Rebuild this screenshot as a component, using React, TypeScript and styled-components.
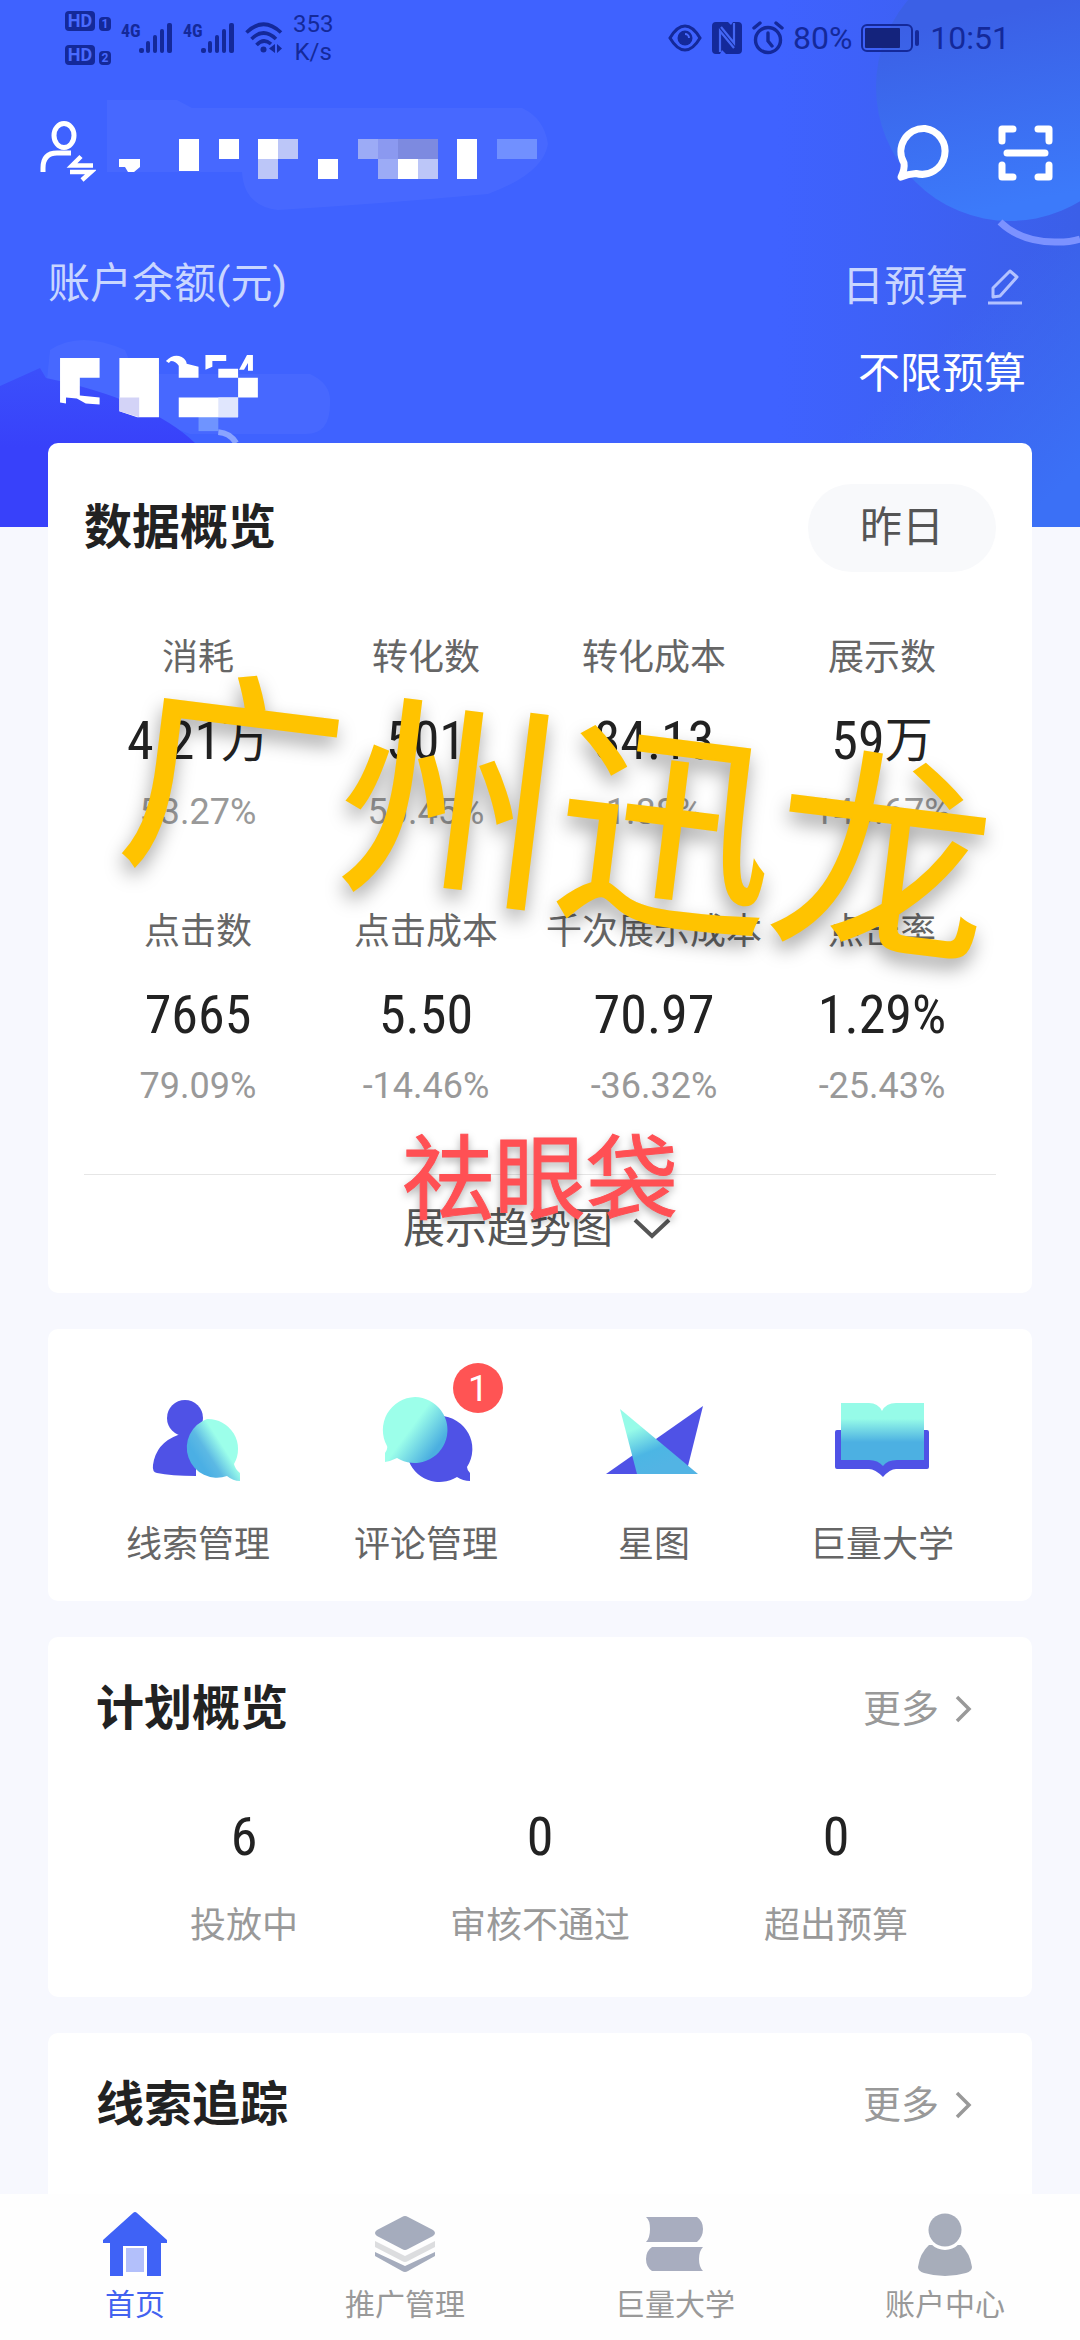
import React from "react";
import styled, { createGlobalStyle } from "styled-components";

const SANS = `Roboto, "Noto Sans CJK SC", sans-serif`;
const NARROW = `"Roboto Condensed", "Arial Narrow", Roboto, "Noto Sans CJK SC", sans-serif`;
const INK = "#14299a";

const GlobalStyle = createGlobalStyle`
  * { box-sizing: border-box; }
  body { margin: 0; background: #f7f8fe; font-family: ${SANS}; color: #222; }
  button { border: 0; background: none; padding: 0; margin: 0; font: inherit; color: inherit; cursor: pointer; }
  a { color: inherit; text-decoration: none; }
  h2, p, dl, dt, dd { margin: 0; font-weight: 400; }
  svg { display: block; }
`;

const Shell = styled.div`
  display: flex;
  flex-direction: column;
  height: 100vh;
  overflow: hidden;
`;

const Scroll = styled.main`
  flex: 1;
  min-height: 0;
  overflow-y: auto;
  scrollbar-width: none;
  display: flex;
  flex-direction: column;
`;

/* ---------- header ---------- */

const Hero = styled.header`
  position: relative;
  flex: none;
  background: linear-gradient(90deg, #3f62ff 0%, #3f62ff 72%, #3b5fe8 100%);
  padding-bottom: 84px;
  overflow: hidden;
`;

const HeroArt = styled.svg`
  position: absolute;
  inset: 0;
  width: 100%;
  height: 100%;
`;

const StatusBar = styled.div`
  position: relative;
  display: flex;
  justify-content: space-between;
  align-items: center;
  height: 72px;
  padding: 4px 70px 0 65px;
  color: ${INK};
`;

const StatusGroup = styled.div<{ $gap: number }>`
  display: flex;
  align-items: center;
  gap: ${(p) => p.$gap}px;
`;

const HdStack = styled.div`
  display: flex;
  flex-direction: column;
  gap: 14px;
`;

const HdLine = styled.div`
  display: flex;
  align-items: flex-end;
  gap: 4px;
`;

const HdBadge = styled.span<{ $small?: boolean }>`
  width: ${(p) => (p.$small ? 12 : 30)}px;
  height: ${(p) => (p.$small ? 14 : 20)}px;
  line-height: ${(p) => (p.$small ? 14 : 20)}px;
  font-size: ${(p) => (p.$small ? 12 : 18)}px;
  font-weight: 700;
  text-align: center;
  border-radius: 4px;
  background: ${INK};
  color: #4a6bff;
`;

const Signal = styled.div`
  display: flex;
  align-items: flex-start;
`;

const SignalLabel = styled.span`
  font: 700 18px/18px ${NARROW};
  width: 18px;
`;

const NetSpeed = styled.span`
  font-size: 24px;
  line-height: 28px;
  text-align: center;
`;

const StatusText = styled.span`
  font-size: 32px;
  line-height: 40px;
`;

const AccountRow = styled.div`
  position: relative;
  display: flex;
  align-items: center;
  height: 110px;
  padding: 48px 26px 0 38px;
`;

const AccountButton = styled.button`
  display: flex;
  align-items: center;
  gap: 22px;
  margin-right: auto;
`;

const HeaderActions = styled.div`
  display: flex;
  gap: 44px;
`;

const BalanceRow = styled.div`
  position: relative;
  display: flex;
  justify-content: space-between;
  height: 183px;
  margin-top: 78px;
  padding: 0 54px 0 48px;
`;

const BalanceColumn = styled.div<{ $end?: boolean }>`
  display: flex;
  flex-direction: column;
  align-items: ${(p) => (p.$end ? "flex-end" : "flex-start")};
  gap: ${(p) => (p.$end ? 36 : 44)}px;
`;

const BalanceLabel = styled.span`
  font-size: 42px;
  line-height: 48px;
  color: #c9d6ff;
`;

const BudgetButton = styled.button`
  display: flex;
  align-items: center;
  gap: 20px;
  height: 54px;
`;

const BudgetValue = styled.span`
  font-size: 42px;
  line-height: 48px;
  color: #fff;
`;

/* ---------- cards ---------- */

const Cards = styled.div`
  position: relative;
  flex: 1;
  display: flex;
  flex-direction: column;
  gap: 36px;
  margin-top: -84px;
  padding: 0 48px;
`;

const Card = styled.section<{ $grow?: boolean }>`
  position: relative;
  background: #fff;
  border-radius: ${(p) => (p.$grow ? "10px 10px 0 0" : "10px")};
  flex: ${(p) => (p.$grow ? "1 0 auto" : "none")};
`;

const OverviewCard = styled(Card)`
  padding: 40px 36px 10px;
`;

const ShortcutCard = styled(Card)`
  display: grid;
  grid-template-columns: repeat(4, 1fr);
  padding: 64px 36px 34px;
`;

const PanelCard = styled(Card)`
  padding: 42px 48px 49px;
`;

const CardHead = styled.div<{ $panel?: boolean }>`
  display: flex;
  align-items: center;
  justify-content: space-between;
  height: ${(p) => (p.$panel ? 60 : 90)}px;
  padding-right: ${(p) => (p.$panel ? 12 : 0)}px;
`;

const Title = styled.h2`
  font-size: 48px;
  line-height: 60px;
  font-weight: 700;
  color: #222;
`;

const DayPill = styled.button`
  width: 188px;
  height: 88px;
  border-radius: 44px;
  background: #f8f9fb;
  font-size: 42px;
  line-height: 48px;
  color: #555;
`;

const MetricGrid = styled.dl`
  display: grid;
  grid-template-columns: repeat(4, 1fr);
  row-gap: 74px;
  margin-top: 61px;
`;

const Metric = styled.div`
  display: flex;
  flex-direction: column;
  align-items: center;
  white-space: nowrap;
`;

const MetricLabel = styled.dt`
  font-size: 36px;
  line-height: 48px;
  color: #666;
`;

const MetricValue = styled.dd`
  display: flex;
  align-items: center;
  margin-top: 27px;
  font: 400 54px/64px ${NARROW};
  color: #222;
`;

const Unit = styled.span`
  font-size: 48px;
`;

const MetricDelta = styled.dd`
  margin-top: 17px;
  font-size: 36px;
  line-height: 44px;
  color: #999;
`;

const TrendButton = styled.button`
  display: flex;
  align-items: center;
  justify-content: center;
  gap: 20px;
  width: 100%;
  height: 109px;
  margin-top: 66px;
  padding-right: 6px;
  border-top: 1px solid #e6e6e6;
  font-size: 42px;
  line-height: 48px;
  color: #555;
`;

const YellowMark = styled.span`
  position: absolute;
  left: 50%;
  top: 360px;
  transform: translate(-50%, -50%) rotate(7deg);
  margin-left: 20px;
  font: 400 218px/1 "Noto Sans CJK SC", sans-serif;
  white-space: nowrap;
  color: #ffc300;
  -webkit-text-stroke: 2px #ffc300;
  text-shadow: 0 10px 20px rgba(0, 0, 0, 0.4);
  pointer-events: none;
`;

const RedMark = styled.span`
  position: absolute;
  left: 50%;
  top: 729px;
  transform: translate(-50%, -50%);
  font: 400 92px/1 "Noto Sans CJK SC", sans-serif;
  white-space: nowrap;
  color: #ff5054;
  -webkit-text-stroke: 1px #ff5054;
  text-shadow: 0 4px 8px rgba(0, 0, 0, 0.35);
  pointer-events: none;
`;

const Shortcut = styled.a`
  display: flex;
  flex-direction: column;
  align-items: center;
  gap: 36px;
  font-size: 36px;
  line-height: 44px;
  color: #666;
`;

const IconBox = styled.span`
  position: relative;
`;

const Badge = styled.span`
  position: absolute;
  right: -30px;
  top: -30px;
  width: 50px;
  height: 50px;
  border-radius: 50%;
  background: #ff5454;
  color: #fff;
  font-size: 36px;
  line-height: 52px;
  text-align: center;
`;

const MoreLink = styled.a`
  display: flex;
  align-items: center;
  gap: 16px;
  font-size: 38px;
  line-height: 60px;
  color: #999;
`;

const StatGrid = styled.dl`
  display: grid;
  grid-template-columns: repeat(3, 1fr);
  margin-top: 66px;
`;

const Stat = styled.div`
  display: flex;
  flex-direction: column-reverse;
  align-items: center;
  gap: 35px;
`;

const StatValue = styled.dd`
  font: 400 54px/64px ${NARROW};
  color: #222;
`;

const StatLabel = styled.dt`
  font-size: 36px;
  line-height: 44px;
  color: #999;
`;

/* ---------- bottom navigation ---------- */

const Nav = styled.nav`
  position: relative;
  flex: none;
  display: grid;
  grid-template-columns: repeat(4, 1fr);
  height: 146px;
  padding-top: 17px;
  background: #fefefe;
`;

const NavItem = styled.a<{ $active?: boolean }>`
  display: flex;
  flex-direction: column;
  align-items: center;
  gap: 10px;
  font-size: 30px;
  line-height: 36px;
  color: ${(p) => (p.$active ? "#4262f0" : "#999")};
`;

/* ---------- drawings ---------- */

const Bars = () => (
  <svg width="34" height="32" viewBox="0 0 34 32" fill={INK}>
    <rect x="0" y="26" width="5" height="5" rx="2" />
    <rect x="7" y="19" width="4" height="12" rx="2" />
    <rect x="14" y="13" width="4" height="18" rx="2" />
    <rect x="21" y="7" width="4" height="24" rx="2" />
    <rect x="28" y="1" width="5" height="30" rx="2" />
  </svg>
);

const Wifi = () => (
  <svg width="38" height="32" viewBox="0 0 38 32" fill="none" stroke={INK} strokeWidth="3.6">
    <path d="M1.5 10.500Q18.500-6 36 10.500" />
    <path d="M6.500 17Q18.500 5 31 17" />
    <path d="M11.500 23Q18.500 15.500 26 22" />
    <circle cx="18.500" cy="27.500" r="3" fill={INK} stroke="none" />
    <path d="M30 22v9l-6-4.500zM32 22l5 4.500-5 4.500z" fill={INK} stroke="none" />
  </svg>
);

const Eye = () => (
  <svg width="34" height="28" viewBox="0 0 34 28" fill="none" stroke={INK} strokeWidth="3">
    <path d="M2 14Q9 2 17 2T32 14Q25 26 17 26T2 14Z" />
    <circle cx="17" cy="14" r="7.500" fill={INK} stroke="none" />
    <path d="M17 10a4 4 0 0 1 4 4" stroke="#4a6bff" strokeWidth="2" />
  </svg>
);

const Nfc = () => (
  <svg width="32" height="32" viewBox="0 0 32 32" fill={INK}>
    <path d="M5 0h12l3 3 2-3h5q4 0 4 4v24q0 4-4 4H15l-4-4-2 4H5q-4 0-4-4V4q0-4 4-4Z" />
    <path d="M9 30V9l14 17M23 1v20L10 5" fill="none" stroke="#4467f4" strokeWidth="2.200" />
  </svg>
);

const Alarm = () => (
  <svg width="32" height="34" viewBox="0 0 32 34" fill="none" stroke={INK} strokeWidth="3.4" strokeLinecap="round">
    <circle cx="16" cy="19" r="12.500" />
    <path d="M2 7l6-5M30 7l-6-5M16 12v8l4 5" />
  </svg>
);

const Battery = () => (
  <svg width="60" height="28" viewBox="0 0 60 28">
    <rect x="1" y="1" width="50" height="26" rx="5" fill="none" stroke={INK} strokeWidth="2" />
    <rect x="4" y="4" width="35" height="20" rx="1" fill="#14237c" />
    <rect x="54" y="6" width="4" height="16" rx="2" fill={INK} />
  </svg>
);

const SwitchUser = () => (
  <svg width="58" height="62" viewBox="0 0 58 62" fill="none" stroke="#fff" strokeWidth="5">
    <ellipse cx="26" cy="15.500" rx="10" ry="12" />
    <path d="M5 52v-4Q5 33 19 33h14" />
    <path d="M55 45.500H34l9-9M32 52h21l-9 8" strokeWidth="4.500" />
  </svg>
);

const MaskedName = () => (
  <svg width="420" height="62" viewBox="118 120 420 62" role="img" aria-label="账户名称">
    <g fill="#fff">
      <path d="M119 159h21v8l-6 5h-6l-3-5h-6z" />
      <path d="M179 139h20v32h-20zM219 139h20v20h-20zM258 139h20v20h-20zM318 159h20v20h-20zM398 159h20v20h-20zM457 139h20v40h-20z" />
    </g>
    <path d="M278 139h20v20h-20zM258 159h20v20h-20zM418 159h20v20h-20z" fill="#bcc6f8" />
    <path d="M358 139h20v20h-20zM378 159h20v20h-20z" fill="#9cabf6" />
    <path d="M378 139h20v20h-20z" fill="#8b99f0" />
    <path d="M398 139h40v20h-40z" fill="#7d8ae0" />
    <path d="M497 139h40v20h-40z" fill="#7190ff" />
  </svg>
);

const MaskedBalance = () => (
  <svg width="214" height="92" viewBox="48 352 214 92" role="img" aria-label="账户余额">
    <path d="M199 417h20v15h-20z" fill="#6f94ff" />
    <path d="M219 433q12 1 18 11" stroke="#8aa4ff" strokeWidth="6" fill="none" />
    <g fill="#fff">
      <path d="M59 358h40v20H79v18l20 2v7l-14-1-9-5-11-1v6l-6-1z" />
      <path d="M119 358h40v60h-22l-18-6zM179 398h60v20h-60zM239 378h20v20h-20z" />
      <path d="M166 361q8-8 16-4 5 3 5 7l12 3v11h-20v-12q-3-5-8-5l-2 2zM206 355h21v6h-14v6l-7 3zM219 369h20v9h-20zM240 370l8-15h6v16h-5v-8l-4 7z" />
    </g>
    <path d="M119 398h20v20l-20-6z" fill="#d3d3f7" />
    <path d="M219 398h20v20h-20z" fill="#e0e6fd" />
  </svg>
);

const Chat = () => (
  <svg width="57" height="62" viewBox="0 -4 57 62" fill="none" stroke="#fff" strokeWidth="7" strokeLinejoin="round">
    <path d="M29 4.500a23 23 0 1 1-9 45Q12 50 5 53Q9 45 8 39A23 23 0 0 1 29 4.500Z" />
  </svg>
);

const Scan = () => (
  <svg width="57" height="62" viewBox="0 -4 57 62" fill="none" stroke="#fff" strokeWidth="7" strokeLinecap="round" strokeLinejoin="round">
    <path d="M16 5H5v12M41 5h11v12M16 53H5V41M41 53h11V41M10 29h38" />
  </svg>
);

const Pencil = () => (
  <svg width="38" height="38" viewBox="0 0 38 38" fill="none" stroke="#b3c2ff" strokeWidth="3" strokeLinejoin="round">
    <path d="M5 20L22 3l7 6-17 19-7 1zM0 35h34" />
  </svg>
);

const ChevronDown = () => (
  <svg width="38" height="24" viewBox="0 0 38 24" fill="none" stroke="#555" strokeWidth="4">
    <path d="M2 3l17 16L36 3" />
  </svg>
);

const ChevronRight = () => (
  <svg width="17" height="28" viewBox="0 0 17 28" fill="none" stroke="#999" strokeWidth="3.500">
    <path d="M2 2l12 12L2 26" />
  </svg>
);

const LeadsIcon = () => (
  <svg width="94" height="94" viewBox="0 0 94 94">
    <defs>
      <linearGradient id="leads" x1="0.250" y1="0.700" x2="0.650" y2="0.400">
        <stop offset="0" stopColor="#4bafe4" />
        <stop offset="0.400" stopColor="#5cb9e4" />
        <stop offset="1" stopColor="#9cffea" />
      </linearGradient>
    </defs>
    <circle cx="34" cy="25" r="18" fill="#4f52e6" />
    <path d="M27 42h18v41Q20 83 6 80 1 79 2 72 5 50 27 42Z" fill="#4f52e6" />
    <path d="M56 26a30 30 0 0 1 27 45q1 5 6 9v8q-7 0-13-5A30 30 0 1 1 56 26Z" fill="url(#leads)" />
  </svg>
);

const CommentsIcon = () => (
  <svg width="94" height="94" viewBox="0 0 94 94">
    <defs>
      <linearGradient id="comments" x1="0.450" y1="0.450" x2="0.850" y2="0.750">
        <stop offset="0" stopColor="#9cffea" />
        <stop offset="1" stopColor="#4bafe0" />
      </linearGradient>
    </defs>
    <path d="M61 23a33 33 0 0 1 27 51q0 3 3 6v8q-7 0-13-4A33 33 0 1 1 61 23Z" fill="#4f52e6" />
    <path d="M36 4a33 33 0 1 1-18 61q-6 3-12 4v-9q3-4 2-7A33 33 0 0 1 36 4Z" fill="url(#comments)" />
  </svg>
);

const StarIcon = () => (
  <svg width="98" height="94" viewBox="-2 0 98 94">
    <defs>
      <linearGradient id="star" x1="0.200" y1="0.300" x2="0.500" y2="0.900">
        <stop offset="0" stopColor="#96fbe8" />
        <stop offset="0.600" stopColor="#4cb6e4" />
        <stop offset="1" stopColor="#52b4e4" />
      </linearGradient>
    </defs>
    <path d="M-1 81L96 13 79 81Z" fill="#4f52e6" />
    <path d="M13 16L91 81H30Z" fill="url(#star)" />
  </svg>
);

const BookIcon = () => (
  <svg width="94" height="94" viewBox="0 0 94 94">
    <defs>
      <linearGradient id="book" x1="0" y1="0" x2="0" y2="1">
        <stop offset="0.250" stopColor="#96fbe8" />
        <stop offset="0.620" stopColor="#4cb0e2" />
      </linearGradient>
    </defs>
    <path d="M2 37h90q2 0 2 2v35q0 2-2 2H61q-6 0-13 8-8-8-14-8H2q-2 0-2-2V39q0-2 2-2Z" fill="#4f52e6" />
    <path d="M6 10h28q9 0 13 8 4-8 14-8h28v57H62q-10 0-14 6-5-6-14-6H6Z" fill="url(#book)" />
  </svg>
);

const HomeIcon = () => (
  <svg width="66" height="66" viewBox="0 0 66 66">
    <path d="M31 2q2-2 4 0l30 27v3h-6v33H8V32H1v-3Z" fill="#3f62f6" />
    <path d="M21 65V35h24v30Z" fill="#fff" />
    <path d="M24 61V37h18v24Z" fill="#b3c0fb" />
  </svg>
);

const LayersIcon = () => (
  <svg width="66" height="66" viewBox="0 0 66 66">
    <path d="M30 6q3-2 6 0l25 13q4 3 0 6L36 38q-3 2-6 0L5 25q-4-3 0-6Z" fill="#a5acbd" />
    <path d="M3 30l30 15 30-15v6L36 50q-3 2-6 0L3 36Z" fill="#dcdddf" />
    <path d="M3 41l30 14 30-14v4L36 60q-3 2-6 0L3 45Z" fill="#a5acbd" />
  </svg>
);

const BooksIcon = () => (
  <svg width="66" height="66" viewBox="0 0 66 66">
    <path d="M4 6h51q6 4 6 12t-6 13H4q4-4 4-13T4 6Z" fill="#a8adbf" />
    <path d="M61 36H10q-6 4-6 12t6 12h51q-4-4-4-12t4-12Z" fill="#a8adbf" />
  </svg>
);

const PersonIcon = () => (
  <svg width="66" height="66" viewBox="0 0 66 66">
    <path d="M17 34h32q9 8 11 22 0 4-6 6-21 6-42 0-6-2-6-6 2-14 11-22Z" fill="#a7adba" />
    <circle cx="33" cy="20" r="19" fill="#fff" />
    <circle cx="33" cy="19" r="16.500" fill="#a7adbb" />
  </svg>
);

/* ---------- data ---------- */

type MetricData = { label: string; value: string; unit?: string; delta: string };

const metrics: MetricData[] = [
  { label: "消耗", value: "4.21", unit: "万", delta: "53.27%" },
  { label: "转化数", value: "501", delta: "50.45%" },
  { label: "转化成本", value: "84.13", delta: "1.88%" },
  { label: "展示数", value: "59", unit: "万", delta: "140.67%" },
  { label: "点击数", value: "7665", delta: "79.09%" },
  { label: "点击成本", value: "5.50", delta: "-14.46%" },
  { label: "千次展示成本", value: "70.97", delta: "-36.32%" },
  { label: "点击率", value: "1.29%", delta: "-25.43%" },
];

const shortcuts = [
  { label: "线索管理", Icon: LeadsIcon, count: 0 },
  { label: "评论管理", Icon: CommentsIcon, count: 1 },
  { label: "星图", Icon: StarIcon, count: 0 },
  { label: "巨量大学", Icon: BookIcon, count: 0 },
];

const plans = [
  { label: "投放中", value: 6 },
  { label: "审核不通过", value: 0 },
  { label: "超出预算", value: 0 },
];

const tabs = [
  { label: "首页", Icon: HomeIcon, active: true },
  { label: "推广管理", Icon: LayersIcon, active: false },
  { label: "巨量大学", Icon: BooksIcon, active: false },
  { label: "账户中心", Icon: PersonIcon, active: false },
];

const PanelHead = ({ title }: { title: string }) => (
  <CardHead $panel>
    <Title>{title}</Title>
    <MoreLink href="#more">
      更多
      <ChevronRight />
    </MoreLink>
  </CardHead>
);

export default function App() {
  return (
    <Shell>
      <GlobalStyle />
      <Scroll>
        <Hero>
          <HeroArt viewBox="0 0 1080 527" preserveAspectRatio="none" aria-hidden="true">
            <defs>
              <linearGradient id="orb" x1="0" y1="0" x2="0.200" y2="1">
                <stop offset="0.300" stopColor="#3b60e6" />
                <stop offset="1" stopColor="#3c7afa" />
              </linearGradient>
              <linearGradient id="corner" x1="0" y1="0" x2="1" y2="1">
                <stop offset="0.450" stopColor="#3b70f6" stopOpacity="0" />
                <stop offset="0.900" stopColor="#3b70f6" />
              </linearGradient>
              <linearGradient id="blob" x1="0" y1="0" x2="0" y2="1">
                <stop offset="0" stopColor="#3b50fb" />
                <stop offset="0.500" stopColor="#3841fa" />
              </linearGradient>
            </defs>
            <rect x="780" y="230" width="300" height="297" fill="url(#corner)" />
            <circle cx="1010" cy="87" r="134" fill="url(#orb)" />
            <path d="M1000 222Q1022 243 1058 242q12 0 22-3" fill="none" stroke="#7c92ff" strokeWidth="7" />
            <path d="M107 100h70l15 8h330q22 10 26 36-5 30-60 50-110 10-210 16-34-4-36-38H107Z" fill="#fff" opacity="0.045" />
            <path d="M50 350q30-20 75 0l10 24h175q22 10 20 30 0 30-24 30H190L47 380Z" fill="#fff" opacity="0.045" />
            <path d="M0 386l40-18 6 10Q150 400 195 443v84H0Z" fill="url(#blob)" />
          </HeroArt>

          <StatusBar>
            <StatusGroup $gap={10}>
              <HdStack>
                <HdLine><HdBadge>HD</HdBadge><HdBadge $small>1</HdBadge></HdLine>
                <HdLine><HdBadge>HD</HdBadge><HdBadge $small>2</HdBadge></HdLine>
              </HdStack>
              <Signal><SignalLabel>4G</SignalLabel><Bars /></Signal>
              <Signal><SignalLabel>4G</SignalLabel><Bars /></Signal>
              <Wifi />
              <NetSpeed>353<br />K/s</NetSpeed>
            </StatusGroup>
            <StatusGroup $gap={9}>
              <Eye />
              <Nfc />
              <Alarm />
              <StatusText>80%</StatusText>
              <Battery />
              <StatusText>10:51</StatusText>
            </StatusGroup>
          </StatusBar>

          <AccountRow>
            <AccountButton aria-label="切换账户">
              <SwitchUser />
              <MaskedName />
            </AccountButton>
            <HeaderActions>
              <button aria-label="消息"><Chat /></button>
              <button aria-label="扫一扫"><Scan /></button>
            </HeaderActions>
          </AccountRow>

          <BalanceRow>
            <BalanceColumn>
              <BalanceLabel>账户余额(元)</BalanceLabel>
              <MaskedBalance />
            </BalanceColumn>
            <BalanceColumn $end>
              <BudgetButton>
                <BalanceLabel>日预算</BalanceLabel>
                <Pencil />
              </BudgetButton>
              <BudgetValue>不限预算</BudgetValue>
            </BalanceColumn>
          </BalanceRow>
        </Hero>

        <Cards>
          <OverviewCard>
            <CardHead>
              <Title>数据概览</Title>
              <DayPill>昨日</DayPill>
            </CardHead>
            <MetricGrid>
              {metrics.map((m) => (
                <Metric key={m.label}>
                  <MetricLabel>{m.label}</MetricLabel>
                  <MetricValue>
                    {m.value}
                    {m.unit && <Unit>{m.unit}</Unit>}
                  </MetricValue>
                  <MetricDelta>{m.delta}</MetricDelta>
                </Metric>
              ))}
            </MetricGrid>
            <TrendButton>
              展示趋势图
              <ChevronDown />
            </TrendButton>
            <YellowMark>广州迅龙</YellowMark>
            <RedMark>祛眼袋</RedMark>
          </OverviewCard>

          <ShortcutCard>
            {shortcuts.map(({ label, Icon, count }) => (
              <Shortcut key={label} href="#shortcut">
                <IconBox>
                  <Icon />
                  {count > 0 && <Badge>{count}</Badge>}
                </IconBox>
                {label}
              </Shortcut>
            ))}
          </ShortcutCard>

          <PanelCard>
            <PanelHead title="计划概览" />
            <StatGrid>
              {plans.map((s) => (
                <Stat key={s.label}>
                  <StatLabel>{s.label}</StatLabel>
                  <StatValue>{s.value}</StatValue>
                </Stat>
              ))}
            </StatGrid>
          </PanelCard>

          <PanelCard $grow>
            <PanelHead title="线索追踪" />
          </PanelCard>
        </Cards>
      </Scroll>

      <Nav>
        {tabs.map(({ label, Icon, active }) => (
          <NavItem key={label} href="#tab" $active={active} aria-current={active ? "page" : undefined}>
            <Icon />
            {label}
          </NavItem>
        ))}
      </Nav>
    </Shell>
  );
}
